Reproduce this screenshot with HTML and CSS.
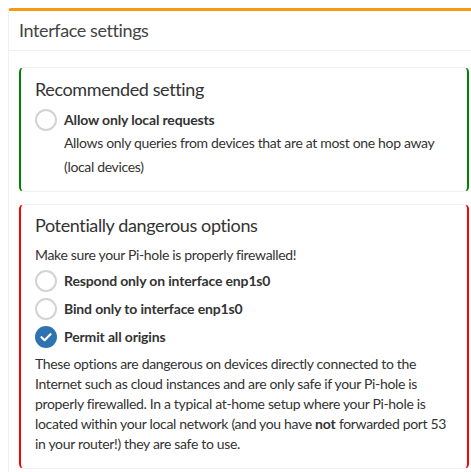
FILE: index.html
```html
<!DOCTYPE html>
<html lang="en">
<head>
  <meta charset="UTF-8" />
  <title>Interface settings</title>
  <link rel="stylesheet" href="styles.css">
</head>
<body>

  <div class="box">
    <div class="box-header">
      <h3>Interface settings</h3>
    </div>
    <div class="box-body">

      <fieldset class="panel panel-ok">
        <h4>Recommended setting</h4>
        <div class="option">
          <span class="radio"></span>
          <label>Allow only local requests</label>
        </div>
        <p class="help">Allows only queries from devices that are at most one hop away (local devices)</p>
      </fieldset>

      <fieldset class="panel panel-danger">
        <h4>Potentially dangerous options</h4>
        <p class="warn">Make sure your Pi-hole is properly firewalled!</p>
        <div class="option">
          <span class="radio"></span>
          <label>Respond only on interface enp1s0</label>
        </div>
        <div class="option">
          <span class="radio"></span>
          <label>Bind only to interface enp1s0</label>
        </div>
        <div class="option">
          <span class="radio checked">
            <svg viewBox="0 0 22 22" width="22" height="22">
              <path d="M6.5 11.2 L9.6 14.2 L15.5 8.2" fill="none" stroke="#fff" stroke-width="2.2" stroke-linecap="round" stroke-linejoin="round"/>
            </svg>
          </span>
          <label>Permit all origins</label>
        </div>
        <p class="note">These options are dangerous on devices directly connected to the Internet such as cloud instances and are only safe if your Pi-hole is properly firewalled. In a typical at-home setup where your Pi-hole is located within your local network (and you have <strong>not</strong> forwarded port 53 in your router!) they are safe to use.</p>
      </fieldset>

    </div>
  </div>

</body>
</html>
```

FILE: styles.css
```css
* {
  margin: 0;
  padding: 0;
  box-sizing: border-box;
}
body {
  font-family: Lato, "Liberation Sans", sans-serif;
  font-size: 14px;
  line-height: 20px;
  letter-spacing: -0.33px;
  color: #333;
  background: #fff;
  overflow: hidden;
  padding: 8px 0 0 8px;
}
.box {
  width: 472px;
  border: 1px solid #f0f0f0;
  border-top: 3px solid #f39c12;
  border-radius: 3px;
  background: #fff;
}
.box-header {
  padding: 9px 10px 10px;
  border-bottom: 1px solid #f0f0f0;
}
.box-header h3 {
  font-size: 18px;
  font-weight: normal;
  line-height: 20px;
  letter-spacing: -0.4px;
  color: #444;
}
.box-body {
  padding: 16px 10px 10px;
  display: flex;
  flex-direction: column;
  gap: 12px;
}
.panel {
  border: 1px solid #f0f0f0;
  border-left-width: 2px;
  border-right-width: 2px;
  border-radius: 5px;
  padding: 11px 14px 12px;
  min-width: 0;
}
.panel-ok {
  border-left-color: #008000;
  border-right-color: #008000;
}
.panel-danger {
  border-left-color: #f00;
  border-right-color: #f00;
  padding-top: 10px;
  padding-bottom: 14px;
}
.panel h4 {
  font-size: 18px;
  font-weight: normal;
  line-height: 20px;
  letter-spacing: -0.38px;
  color: #333;
  margin-bottom: 10px;
}
.option {
  display: flex;
  align-items: center;
  gap: 7px;
  height: 22px;
  margin-bottom: 6px;
}
.option label {
  font-weight: bold;
  letter-spacing: -0.15px;
}
.radio {
  width: 22px;
  height: 22px;
  flex: none;
  border: 2px solid #d3d3d3;
  border-radius: 50%;
  background: #fff;
}
.radio.checked {
  border: none;
  background: #2f72b0;
}
.radio svg {
  display: block;
}
.help {
  margin-left: 29px;
  margin-top: -6px;
  line-height: 24px;
}
.warn {
  margin-top: 2px;
  margin-bottom: 5px;
}
.note {
  margin-top: 3px;
}
.note strong {
  letter-spacing: -0.15px;
}
```
